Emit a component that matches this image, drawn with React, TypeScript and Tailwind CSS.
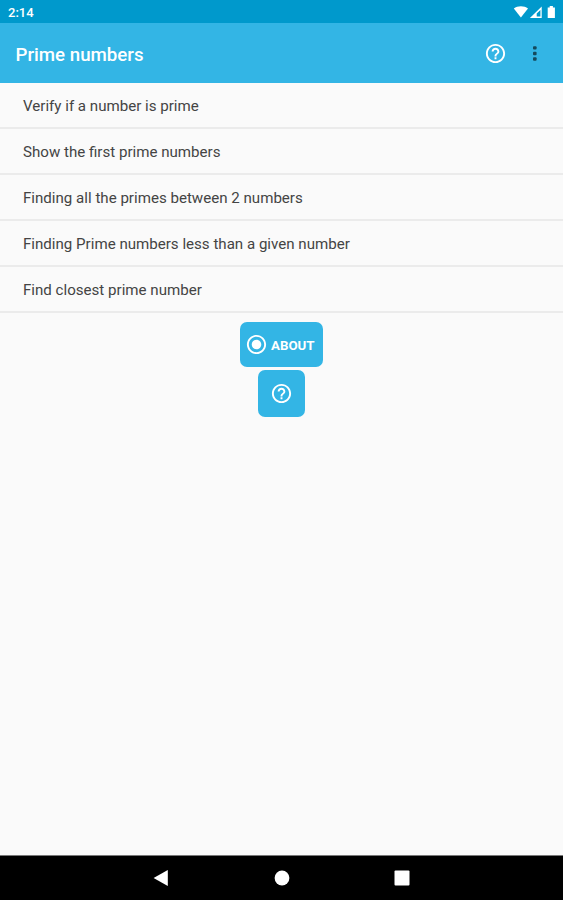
import { MdHelpOutline, MdRadioButtonChecked } from "react-icons/md";

const menuItems = [
  "Verify if a number is prime",
  "Show the first prime numbers",
  "Finding all the primes between 2 numbers",
  "Finding Prime numbers less than a given number",
  "Find closest prime number",
];

function StatusBar() {
  return (
    <div className="flex h-[23px] shrink-0 items-center justify-between bg-[#0099cc] pr-[6px] pl-2 text-white">
      <span className="pt-[2px] text-[13px] leading-none font-medium">2:14</span>
      <svg width="44" height="14" viewBox="0 0 44 14" fill="currentColor">
        <path d="M0.8 3.6C4.6 0.4 11.2 0.4 15 3.6L7.9 12.6Z" />
        <path d="M28.7 1.5V12.9H16.9Z M27.4 4.9V11.6H23.7V8.6Z" fillRule="evenodd" />
        <path d="M34.7 2.5H36.7V1H39.9V2.5H41.9V13H34.7Z" />
      </svg>
    </div>
  );
}

function AppBar() {
  return (
    <header className="flex h-[60px] shrink-0 items-center bg-[#33b5e5] pr-[17px] pl-[15.5px] text-white">
      <h1 className="flex-1 pt-[4px] text-[18.7px] leading-none font-medium">Prime numbers</h1>
      <button type="button" aria-label="Help" className="mr-4">
        <MdHelpOutline size={23} />
      </button>
      <button type="button" aria-label="More options" className="text-[#15495c]">
        <svg width="23" height="23" viewBox="0 0 23 23" fill="currentColor">
          <rect x="10" y="4.2" width="3.6" height="3.4" rx="1" />
          <rect x="10" y="9.8" width="3.6" height="3.4" rx="1" />
          <rect x="10" y="15.3" width="3.6" height="3.4" rx="1" />
        </svg>
      </button>
    </header>
  );
}

function NavigationBar() {
  return (
    <nav className="flex h-[45px] shrink-0 items-center justify-center border-t border-[#777777] bg-black text-white">
      <svg width="260" height="18" viewBox="0 0 260 18" fill="currentColor">
        <path d="M1.6 9L15.8 1V17Z" />
        <circle cx="130" cy="9" r="7.4" />
        <rect x="242.5" y="1.5" width="15" height="15" rx="1" />
      </svg>
    </nav>
  );
}

export default function App() {
  return (
    <div className="flex h-[900px] w-[563px] flex-col bg-[#fafafa] font-['Roboto',sans-serif]">
      <StatusBar />
      <AppBar />
      <main className="flex flex-1 flex-col items-center">
        <ul className="w-full">
          {menuItems.map((item) => (
            <li
              key={item}
              className="flex h-[46px] items-center border-b-2 border-[#ebebeb] pt-[2px] pl-[23px] text-[15.1px] text-[#444444]"
            >
              {item}
            </li>
          ))}
        </ul>
        <button
          type="button"
          className="mt-[9px] flex h-[45px] w-[83px] items-center gap-[3px] rounded-[7px] bg-[#33b5e5] pl-[5px] text-[13.3px] font-bold text-white"
        >
          <MdRadioButtonChecked size={23} />
          <span className="pt-[2px]">ABOUT</span>
        </button>
        <button
          type="button"
          aria-label="Help"
          className="mt-[3px] flex h-[47px] w-[47px] items-center justify-center rounded-[7px] bg-[#33b5e5] text-white"
        >
          <MdHelpOutline size={23} />
        </button>
      </main>
      <NavigationBar />
    </div>
  );
}
